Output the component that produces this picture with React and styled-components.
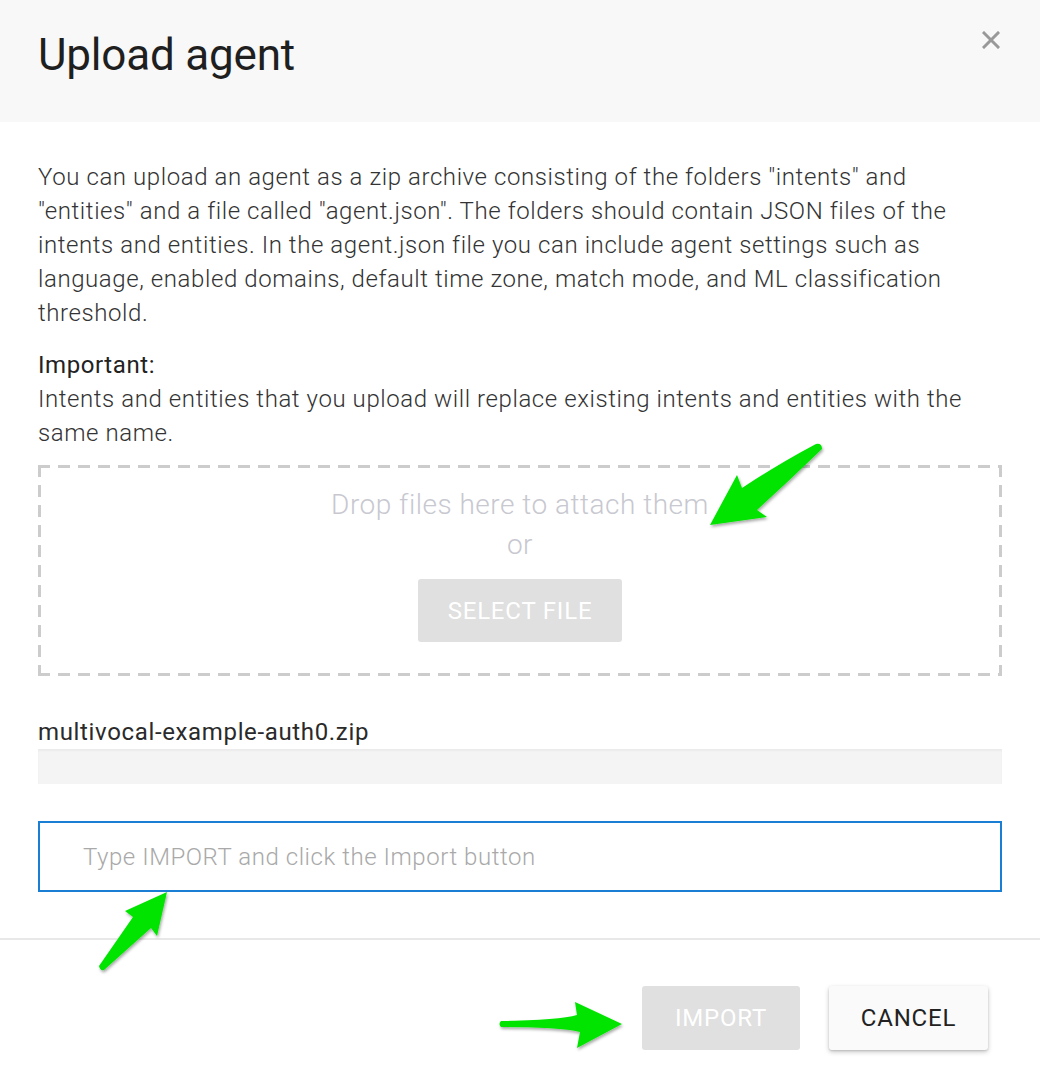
import React from "react";
import styled, { createGlobalStyle } from "styled-components";

const GlobalStyle = createGlobalStyle`
  html, body {
    margin: 0;
    padding: 0;
    background: #ffffff;
  }
  body {
    font-family: Roboto, "Liberation Sans", Arial, sans-serif;
    color: #222;
  }
  * {
    box-sizing: border-box;
  }
`;

const Page = styled.div`
  position: relative;
  width: 1040px;
  min-height: 1086px;
  background: #fff;
`;

const Header = styled.div`
  height: 122px;
  background: #f8f8f8;
  display: flex;
  justify-content: space-between;
  align-items: flex-start;
  padding: 27px 38px 0 38px;
`;

const Title = styled.h1`
  margin: 0;
  font-size: 44px;
  line-height: 56px;
  font-weight: 400;
  color: #1f1f1f;
  letter-spacing: -0.2px;
`;

const CloseButton = styled.button`
  border: none;
  background: transparent;
  padding: 0;
  margin: 2px 0 0 0;
  width: 22px;
  height: 22px;
  display: flex;
  align-items: center;
  justify-content: center;
  cursor: pointer;
`;

const Body = styled.div`
  padding: 38px 38px 0 38px;
  display: flex;
  flex-direction: column;
`;

const Paragraph = styled.p`
  margin: 0 0 ${({ gap }) => gap || 0}px 0;
  font-size: 24px;
  line-height: 34px;
  font-weight: 300;
  letter-spacing: 0.58px;
  color: #333;
`;

const Strong = styled.span`
  display: block;
  font-weight: 400;
  color: #222;
`;

// dashes of 12px with 8px gaps, drawn as backgrounds so the rhythm matches
const dashH = "repeating-linear-gradient(90deg, #cccccc 0 12px, transparent 12px 20px)";
const dashV = "repeating-linear-gradient(180deg, #cccccc 0 12px, transparent 12px 20px)";

const DropZone = styled.div`
  margin-top: 15px;
  height: 211px;
  background:
    ${dashH} top left / 100% 3px no-repeat,
    ${dashH} bottom left / 100% 3px no-repeat,
    ${dashV} top left / 3px 100% no-repeat,
    ${dashV} top right / 3px 100% no-repeat;
  display: flex;
  flex-direction: column;
  align-items: center;
  padding-top: 20px;
`;

const DropText = styled.div`
  font-size: 28px;
  line-height: 40px;
  font-weight: 300;
  letter-spacing: 0.5px;
  color: #c8c8d0;
`;

const FlatButton = styled.button`
  border: none;
  border-radius: 3px;
  font-family: inherit;
  font-size: 24px;
  font-weight: 400;
  text-transform: uppercase;
  letter-spacing: 0.8px;
  width: ${({ w }) => w}px;
  height: ${({ h }) => h}px;
  background: ${({ light }) => (light ? "#fafafa" : "#e0e0e0")};
  color: ${({ light }) => (light ? "#222" : "#fff")};
  box-shadow: ${({ light }) =>
    light ? "0 2px 5px rgba(0,0,0,0.22), 0 1px 2px rgba(0,0,0,0.12)" : "none"};
  cursor: pointer;
`;

const SelectWrap = styled.div`
  margin-top: 14px;
`;

const FileName = styled.div`
  margin-top: 40px;
  font-size: 24px;
  line-height: 32px;
  font-weight: 400;
  letter-spacing: 0.65px;
  color: #2a2a2a;
`;

const Progress = styled.div`
  margin-top: 1px;
  height: 35px;
  background: #f4f4f4;
  box-shadow: inset 0 2px 2px rgba(0, 0, 0, 0.04);
`;

const ConfirmInput = styled.input`
  margin-top: 37px;
  height: 71px;
  width: 100%;
  border: 2px solid #1a7fd4;
  padding: 0 0 0 43px;
  font-family: inherit;
  font-size: 24px;
  font-weight: 300;
  letter-spacing: 0.55px;
  color: #222;
  outline: none;
  &::placeholder {
    color: #a9a9a9;
  }
`;

const Divider = styled.div`
  margin-top: 46px;
  height: 2px;
  background: #e8e8e8;
`;

const Footer = styled.div`
  display: flex;
  justify-content: flex-end;
  gap: 29px;
  padding: 46px 52px 0 0;
`;

const Arrows = styled.svg`
  position: absolute;
  top: 0;
  left: 0;
  pointer-events: none;
`;

const CloseIcon = () => (
  <svg width="18" height="18" viewBox="0 0 18 18">
    <path d="M2 2 L16 16 M16 2 L2 16" stroke="#999" strokeWidth="3" strokeLinecap="square" />
  </svg>
);

const App = () => {
  return (
    <Page>
      <GlobalStyle />
      <Header>
        <Title>Upload agent</Title>
        <CloseButton aria-label="close">
          <CloseIcon />
        </CloseButton>
      </Header>
      <Body>
        <Paragraph gap={18}>
          You can upload an agent as a zip archive consisting of the folders "intents" and
          "entities" and a file called "agent.json". The folders should contain JSON files of the
          intents and entities. In the agent.json file you can include agent settings such as
          language, enabled domains, default time zone, match mode, and ML classification
          threshold.
        </Paragraph>
        <Paragraph>
          <Strong>Important:</Strong>
          Intents and entities that you upload will replace existing intents and entities with the
          same name.
        </Paragraph>
        <DropZone>
          <DropText>Drop files here to attach them</DropText>
          <DropText>or</DropText>
          <SelectWrap>
            <FlatButton w={204} h={63}>Select file</FlatButton>
          </SelectWrap>
        </DropZone>
        <FileName>multivocal-example-auth0.zip</FileName>
        <Progress />
        <ConfirmInput placeholder="Type IMPORT and click the Import button" />
      </Body>
      <Divider />
      <Footer>
        <FlatButton w={158} h={64}>Import</FlatButton>
        <FlatButton light w={159} h={64}>Cancel</FlatButton>
      </Footer>

      <Arrows width="1040" height="1086" viewBox="0 0 1040 1086">
        <defs>
          <filter id="arrowShadow" x="-20%" y="-20%" width="140%" height="140%">
            <feDropShadow dx="1" dy="2" stdDeviation="1.5" floodColor="#000" floodOpacity="0.35" />
          </filter>
        </defs>
        <g fill="#00e400" filter="url(#arrowShadow)">
          <path d="M816 444 Q822 443 822 449 Q790 480 757 510 L767 517 L710 525 L737 475 L742 488 Q780 463 816 444 Z" />
          <path d="M99 966 L133 917 L125 911 L167 892 L157 936 L151 928 L104 970 Q100 971 99 966 Z" />
          <path d="M501 1021 Q560 1020 577 1015 L575 1002 L622 1024 L577 1048 L580 1032 Q560 1027 501 1027 Q498 1024 501 1021 Z" />
        </g>
      </Arrows>
    </Page>
  );
};

export default App;
